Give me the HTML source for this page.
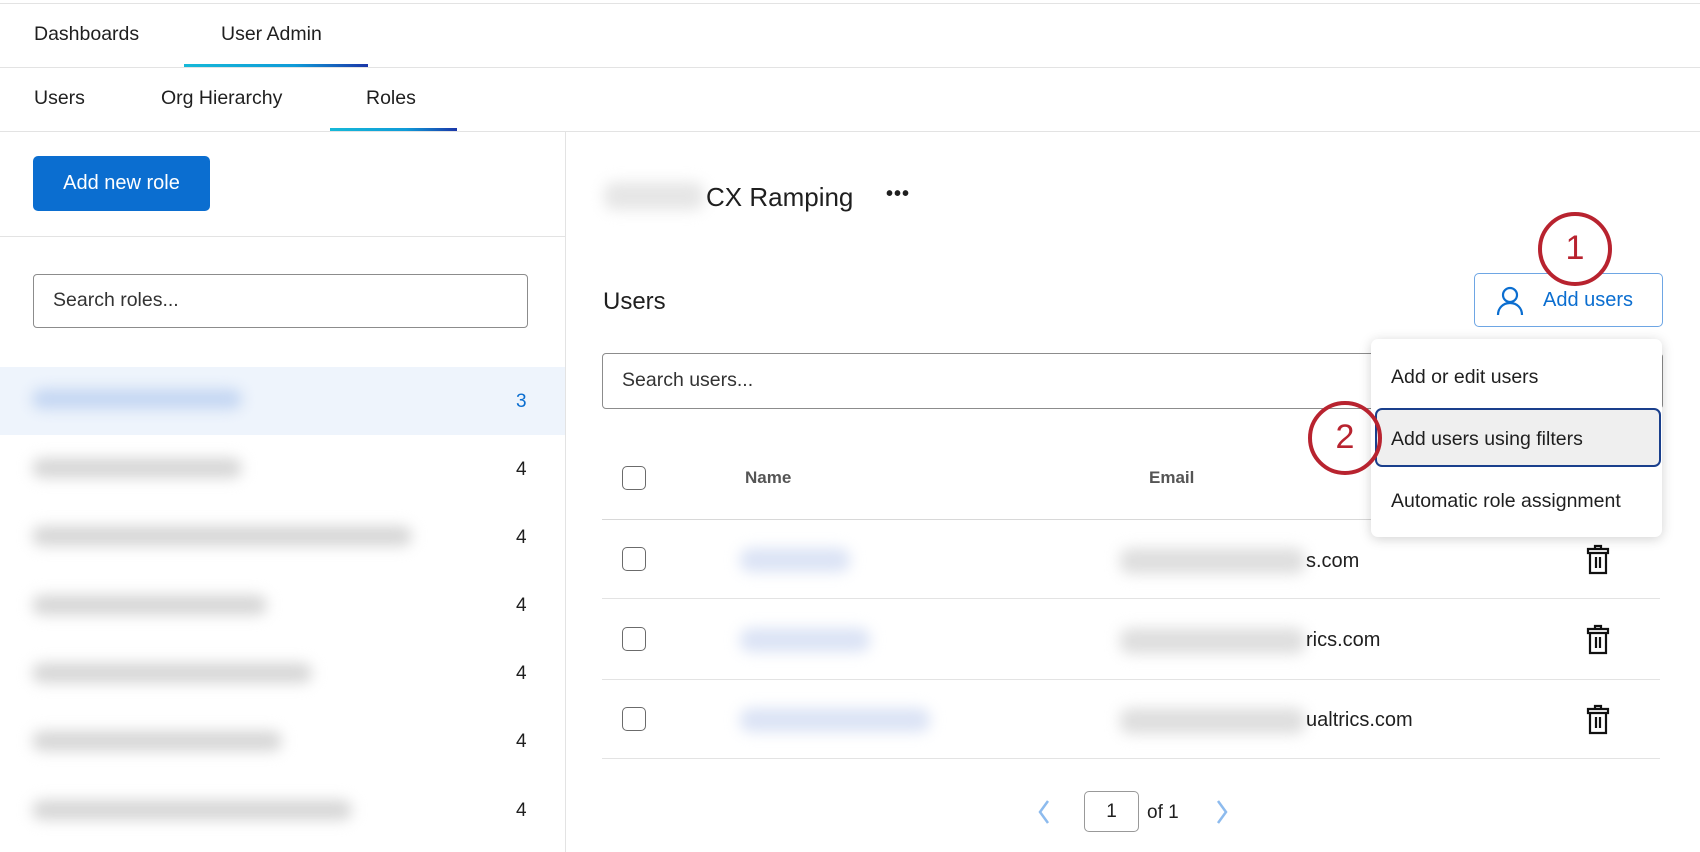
<!DOCTYPE html>
<html><head><meta charset="utf-8"><style>
*{box-sizing:border-box;margin:0;padding:0}
body{width:1700px;height:852px;overflow:hidden;background:#fff;font-family:"Liberation Sans",sans-serif;color:#1f1f1f;position:relative}
.a{position:absolute;white-space:nowrap}
.hl{position:absolute;height:1px;background:#e3e3e3}
.t{font-size:19.5px;line-height:1}
.ul{position:absolute;height:3px;background:linear-gradient(90deg,#16b9d8,#0f9bd8 60%,#1b36a8)}
.blur{position:absolute;filter:blur(7px);border-radius:10px}
.cnt{font-size:19px;position:absolute;left:516px}
.cb{position:absolute;width:24px;height:24px;border:1.5px solid #6b6b6b;border-radius:5px;background:#fff}
.circ{position:absolute;width:74px;height:74px;border:4.5px solid #b8232f;border-radius:50%;background:#fff;color:#b8232f;font-size:34px;text-align:center;line-height:65px}
</style></head><body>
<div class="hl" style="top:3px;left:0;width:1700px"></div>
<div class="a t" style="left:34px;top:25px">Dashboards</div>
<div class="a t" style="left:221px;top:25px">User Admin</div>
<div class="hl" style="top:67px;left:0;width:1700px"></div>
<div class="ul" style="left:184px;top:64px;width:184px"></div>
<div class="a t" style="left:34px;top:89px">Users</div>
<div class="a t" style="left:161px;top:89px">Org Hierarchy</div>
<div class="a t" style="left:366px;top:89px">Roles</div>
<div class="hl" style="top:131px;left:0;width:1700px"></div>
<div class="ul" style="left:330px;top:128px;width:127px"></div>
<div style="position:absolute;left:565px;top:131px;width:1px;height:721px;background:#e3e3e3"></div>
<div class="a" style="left:33px;top:156px;width:177px;height:55px;background:#0b6ed0;border-radius:5px;color:#fff;font-size:20px;line-height:55px;text-align:center">Add new role</div>
<div class="hl" style="top:236px;left:0;width:565px"></div>
<div class="a" style="left:33px;top:274px;width:495px;height:54px;border:1.5px solid #8c8c8c;border-radius:4px;font-size:19.5px;line-height:51px;padding-left:19px;color:#333">Search roles...</div>
<div class="a" style="left:0;top:367px;width:565px;height:68px;background:#eef4fc"></div>
<div class="blur" style="left:32px;top:389px;width:210px;height:20px;background:#c4d6f2"></div>
<div class="cnt" style="top:391px;color:#0b6ed0">3</div>
<div class="blur" style="left:32px;top:458px;width:210px;height:20px;background:#d6d6d6"></div><div class="cnt" style="top:459px">4</div>
<div class="blur" style="left:32px;top:526px;width:380px;height:20px;background:#d6d6d6"></div><div class="cnt" style="top:527px">4</div>
<div class="blur" style="left:32px;top:595px;width:235px;height:20px;background:#d6d6d6"></div><div class="cnt" style="top:595px">4</div>
<div class="blur" style="left:32px;top:663px;width:280px;height:20px;background:#d6d6d6"></div><div class="cnt" style="top:663px">4</div>
<div class="blur" style="left:32px;top:731px;width:250px;height:20px;background:#d6d6d6"></div><div class="cnt" style="top:731px">4</div>
<div class="blur" style="left:32px;top:800px;width:320px;height:20px;background:#d6d6d6"></div><div class="cnt" style="top:800px">4</div>

<div class="blur" style="left:604px;top:182px;width:100px;height:28px;background:#e6e6e6"></div>
<div class="a" style="left:706px;top:182px;font-size:26px">CX Ramping</div>
<div class="a" style="left:886px;top:183px;font-size:20px;letter-spacing:1px;font-weight:bold">•••</div>
<div class="a" style="left:603px;top:288px;font-size:24px">Users</div>
<div class="a" style="left:1474px;top:273px;width:189px;height:54px;border:1.5px solid #6ea6e4;border-radius:5px;color:#0b6ed0;font-size:20px;line-height:53px;padding-left:68px">Add users</div>
<svg class="a" style="left:1496px;top:286px" width="28" height="30" viewBox="0 0 28 30"><circle cx="14" cy="9" r="7" fill="none" stroke="#0b6ed0" stroke-width="2.2"/><path d="M2 29c0-7 5-12 12-12s12 5 12 12" fill="none" stroke="#0b6ed0" stroke-width="2.2"/></svg>
<div class="a" style="left:602px;top:353px;width:1061px;height:56px;border:1.5px solid #8c8c8c;border-radius:4px;font-size:19.5px;line-height:53px;padding-left:19px;color:#333">Search users...</div>

<div class="cb" style="left:622px;top:466px"></div>
<div class="a" style="left:745px;top:468px;font-size:17px;font-weight:bold;color:#555">Name</div>
<div class="a" style="left:1149px;top:468px;font-size:17px;font-weight:bold;color:#555">Email</div>
<div class="hl" style="top:519px;left:602px;width:1058px;background:#d8d8d8"></div>
<div class="cb" style="left:622px;top:547px"></div>
<div class="cb" style="left:622px;top:627px"></div>
<div class="cb" style="left:622px;top:707px"></div>
<div class="hl" style="top:598px;left:602px;width:1058px"></div>
<div class="hl" style="top:679px;left:602px;width:1058px"></div>
<div class="hl" style="top:758px;left:602px;width:1058px"></div>
<div class="blur" style="left:740px;top:548px;width:110px;height:24px;background:#dbe3f5"></div>
<div class="blur" style="left:740px;top:628px;width:130px;height:24px;background:#dbe3f5"></div>
<div class="blur" style="left:740px;top:708px;width:190px;height:24px;background:#dbe3f5"></div>
<div class="blur" style="left:1120px;top:548px;width:185px;height:26px;background:#dedede"></div>
<div class="blur" style="left:1120px;top:628px;width:185px;height:26px;background:#dedede"></div>
<div class="blur" style="left:1120px;top:708px;width:185px;height:26px;background:#dedede"></div>
<div class="a" style="left:1306px;top:550px;font-size:20px">s.com</div>
<div class="a" style="left:1306px;top:629px;font-size:20px">rics.com</div>
<div class="a" style="left:1306px;top:709px;font-size:20px">ualtrics.com</div>
<svg class="a" style="left:1586px;top:544px" width="24" height="32" viewBox="0 0 24 32"><g fill="none" stroke="#111" stroke-width="2.2"><path d="M9 4V2h6v2M2 5h20v4H2zM4 9v20h16V9M10 13v11M14 13v11"/></g></svg>
<svg class="a" style="left:1586px;top:624px" width="24" height="32" viewBox="0 0 24 32"><g fill="none" stroke="#111" stroke-width="2.2"><path d="M9 4V2h6v2M2 5h20v4H2zM4 9v20h16V9M10 13v11M14 13v11"/></g></svg>
<svg class="a" style="left:1586px;top:704px" width="24" height="32" viewBox="0 0 24 32"><g fill="none" stroke="#111" stroke-width="2.2"><path d="M9 4V2h6v2M2 5h20v4H2zM4 9v20h16V9M10 13v11M14 13v11"/></g></svg>

<svg class="a" style="left:1036px;top:799px" width="16" height="26" viewBox="0 0 16 26"><path d="M12 2L4 13l8 11" fill="none" stroke="#8dbbee" stroke-width="2.5"/></svg>
<div class="a" style="left:1084px;top:791px;width:55px;height:41px;border:1.5px solid #999;border-radius:5px;text-align:center;line-height:40px;font-size:19px">1</div>
<div class="a" style="left:1147px;top:802px;font-size:19px">of 1</div>
<svg class="a" style="left:1214px;top:799px" width="16" height="26" viewBox="0 0 16 26"><path d="M4 2l8 11-8 11" fill="none" stroke="#8dbbee" stroke-width="2.5"/></svg>

<div class="a" style="left:1371px;top:339px;width:291px;height:198px;background:#fff;border-radius:7px;box-shadow:0 2px 12px rgba(0,0,0,.18)"></div>
<div class="a" style="left:1391px;top:366px;font-size:19.5px">Add or edit users</div>
<div class="a" style="left:1375px;top:408px;width:286px;height:59px;background:#efefef;border:2.5px solid #1a3f8c;border-radius:7px"></div>
<div class="a" style="left:1391px;top:428px;font-size:19.5px">Add users using filters</div>
<div class="a" style="left:1391px;top:490px;font-size:19.5px">Automatic role assignment</div>

<div class="circ" style="left:1538px;top:212px">1</div>
<div class="circ" style="left:1308px;top:401px;background:transparent">2</div>
</body></html>
